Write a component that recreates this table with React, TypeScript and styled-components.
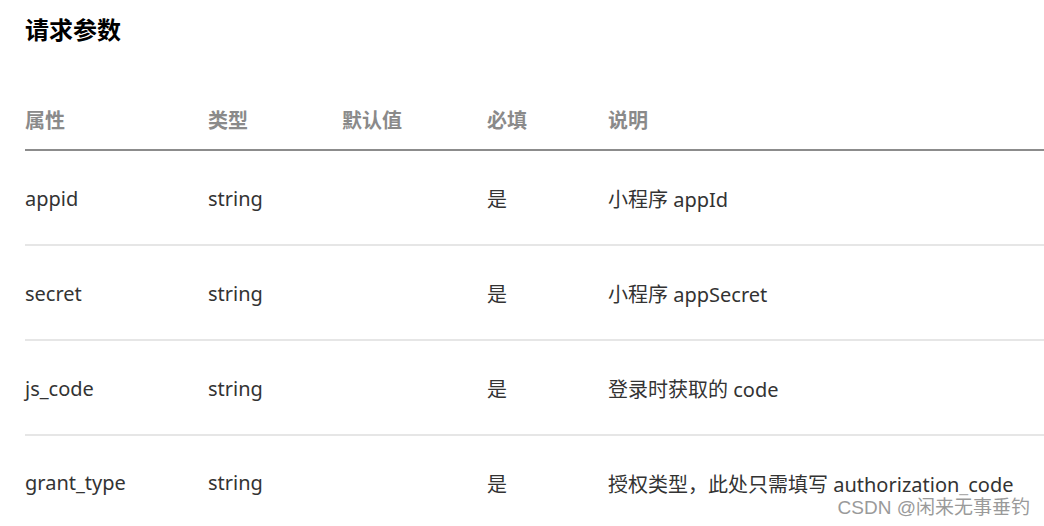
import styled, { createGlobalStyle } from 'styled-components';

const GlobalStyle = createGlobalStyle`
  body {
    margin: 0;
    background: #fff;
    font-family: "Noto Sans", "Noto Sans CJK SC", sans-serif;
    overflow: hidden;
  }
`;

const Page = styled.div`
  position: relative;
  width: 1044px;
  height: 526px;
  padding-left: 25px;
  box-sizing: border-box;
  overflow: hidden;
`;

const Title = styled.h2`
  margin: 0;
  padding-top: 16px;
  font-size: 24px;
  line-height: 27px;
  font-weight: 700;
  color: #000;
`;

const Table = styled.div`
  margin-top: 48px;
  display: grid;
  grid-template-columns: 183px 134px 145px 121px 1fr;
`;

const HeadCell = styled.div`
  height: 60px;
  display: flex;
  align-items: center;
  padding-bottom: 2px;
  box-sizing: border-box;
  font-size: 20px;
  font-weight: 700;
  color: #8a8a8a;
  border-bottom: 2px solid #8c8c8c;
`;

const Cell = styled.div<{ $last?: boolean }>`
  height: ${({ $last }) => ($last ? '100px' : '95px')};
  display: flex;
  align-items: ${({ $last }) => ($last ? 'flex-start' : 'center')};
  padding-top: ${({ $last }) => ($last ? '33px' : '2px')};
  box-sizing: border-box;
  font-size: 20px;
  color: #333;
  white-space: nowrap;
  border-bottom: ${({ $last }) => ($last ? 'none' : '2px solid #e6e6e6')};
`;

const Watermark = styled.div`
  position: absolute;
  right: 14px;
  bottom: 7px;
  font-size: 19px;
  color: #9a9a9a;
  font-family: "Liberation Sans", "Noto Sans CJK SC", sans-serif;
  background: rgba(255, 255, 255, 0.6);
`;

const headers = ['属性', '类型', '默认值', '必填', '说明'];

const rows = [
  ['appid', 'string', '', '是', '小程序 appId'],
  ['secret', 'string', '', '是', '小程序 appSecret'],
  ['js_code', 'string', '', '是', '登录时获取的 code'],
  ['grant_type', 'string', '', '是', '授权类型，此处只需填写 authorization_code'],
];

export default function App() {
  return (
    <Page>
      <GlobalStyle />
      <Title>请求参数</Title>
      <Table>
        {headers.map((h) => (
          <HeadCell key={h}>{h}</HeadCell>
        ))}
        {rows.map((r, i) =>
          r.map((c, j) => (
            <Cell key={`${i}-${j}`} $last={i === rows.length - 1}>
              {c}
            </Cell>
          ))
        )}
      </Table>
      <Watermark>CSDN @闲来无事垂钓</Watermark>
    </Page>
  );
}
